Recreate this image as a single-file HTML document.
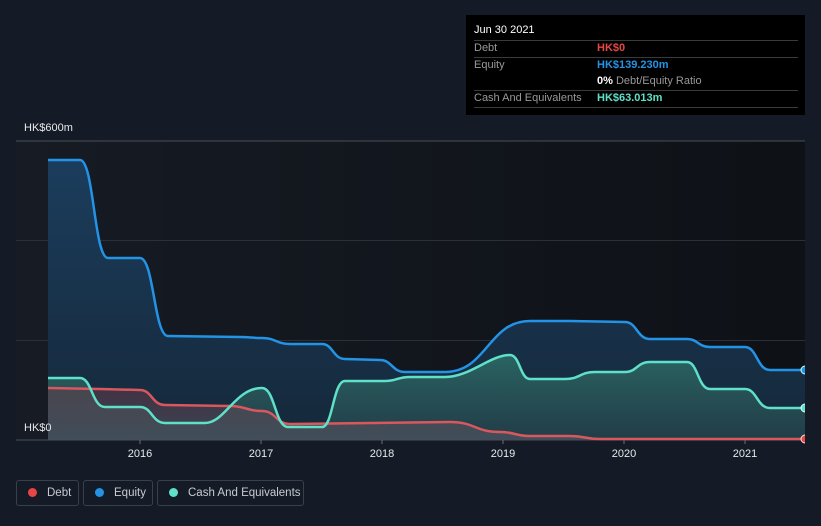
<!DOCTYPE html>
<html><head><meta charset="utf-8"><style>
body{margin:0;width:821px;height:526px;background:#151b26;font-family:"Liberation Sans",sans-serif;overflow:hidden;position:relative}
.t{position:absolute;font-size:11px;white-space:nowrap}
.tip{position:absolute;left:466px;top:15px;width:339px;height:100px;background:#000}
.ln{position:absolute;left:8px;width:324px;height:1px;background:#3a3a3a}
.lg{position:absolute;top:480px;height:26px;border:1px solid #3a404b;border-radius:3px;box-sizing:border-box;color:#c8cbd0;font-size:11.5px;line-height:24px}
.dot{display:inline-block;width:9px;height:9px;border-radius:50%;margin:0 10px 0 11px;vertical-align:-1px}
</style></head><body>
<svg width="821" height="526" style="position:absolute;left:0;top:0">
<defs>
<linearGradient id="bg" x1="0" x2="1" y1="0" y2="0"><stop offset="0" stop-color="#161b24"/><stop offset="1" stop-color="#0e1116"/></linearGradient>
<linearGradient id="eq" x1="0" x2="0" y1="0" y2="1"><stop offset="0" stop-color="#1b3d5c"/><stop offset="1" stop-color="#15283a"/></linearGradient>
<linearGradient id="ca" x1="0" x2="0" y1="0" y2="1"><stop offset="0" stop-color="#2c6a66" stop-opacity=".9"/><stop offset="1" stop-color="#2a4b50" stop-opacity=".6"/></linearGradient>
<linearGradient id="de" x1="0" x2="0" y1="0" y2="1"><stop offset="0" stop-color="#6a3a48" stop-opacity=".5"/><stop offset="1" stop-color="#555a66" stop-opacity=".6"/></linearGradient>
<clipPath id="c"><rect x="0" y="0" width="805" height="526"/></clipPath>
</defs>
<rect x="16" y="141" width="789" height="299" fill="url(#bg)"/>
<line x1="16" x2="805" y1="141" y2="141" stroke="#4a4e57"/>
<line x1="16" x2="805" y1="240.5" y2="240.5" stroke="#2b2f37"/>
<line x1="16" x2="805" y1="340.5" y2="340.5" stroke="#2b2f37"/>
<line x1="16" x2="805" y1="440" y2="440" stroke="#4a4e57"/>
<g clip-path="url(#c)">
<path fill="url(#eq)" d="M48,160 L80,160 C94,160 94,258 108,258 L140,258 C154,258 154,336 168,336 L240,337 C251,337 251,338 262,338 C276,338 276,344 290,344 L322,344 C333,344 333,359 345,359 L380,360 C392,360 392,372 405,372 L445,372 C487,372 488,321 530,321 L570,321 L625,322 C637,322 637,339 650,339 L687,339 C698,339 698,347 710,347 L745,347 C757,347 757,370 770,370 L805,370 L805,440 L48,440Z"/>
<path fill="url(#ca)" d="M48,378 L80,378 C92,378 92,407 105,407 L140,407 C152,407 152,423 165,423 L205,423 C225,423 235,388 262,388 C275,388 275,427 288,427 L322,427 C333,427 333,381 345,381 L385,381 C397,381 397,377 410,377 L445,377 C470,377 490,355 510,355 C520,355 520,379 530,379 L565,379 C580,379 580,372 595,372 L625,372 C637,372 637,362 650,362 L687,362 C698,362 698,389 710,389 L745,389 C757,389 757,408 770,408 L805,408 L805,440 L48,440Z"/>
<path fill="url(#de)" d="M48,388 L100,389 L140,390 C152,390 152,405 165,405 L230,406 C246,406 246,411 262,411 C276,411 276,424 290,424 L450,422 C475,422 475,432 500,432 C515,432 515,436 530,436 L570,436 C585,436 585,439 600,439 L805,439 L805,440 L48,440Z"/>
<path fill="none" stroke="#d9585e" stroke-width="2.5" d="M48,388 L100,389 L140,390 C152,390 152,405 165,405 L230,406 C246,406 246,411 262,411 C276,411 276,424 290,424 L450,422 C475,422 475,432 500,432 C515,432 515,436 530,436 L570,436 C585,436 585,439 600,439 L805,439"/>
<path fill="none" stroke="#5fe0c8" stroke-width="2.5" d="M48,378 L80,378 C92,378 92,407 105,407 L140,407 C152,407 152,423 165,423 L205,423 C225,423 235,388 262,388 C275,388 275,427 288,427 L322,427 C333,427 333,381 345,381 L385,381 C397,381 397,377 410,377 L445,377 C470,377 490,355 510,355 C520,355 520,379 530,379 L565,379 C580,379 580,372 595,372 L625,372 C637,372 637,362 650,362 L687,362 C698,362 698,389 710,389 L745,389 C757,389 757,408 770,408 L805,408"/>
<path fill="none" stroke="#2393e6" stroke-width="2.5" d="M48,160 L80,160 C94,160 94,258 108,258 L140,258 C154,258 154,336 168,336 L240,337 C251,337 251,338 262,338 C276,338 276,344 290,344 L322,344 C333,344 333,359 345,359 L380,360 C392,360 392,372 405,372 L445,372 C487,372 488,321 530,321 L570,321 L625,322 C637,322 637,339 650,339 L687,339 C698,339 698,347 710,347 L745,347 C757,347 757,370 770,370 L805,370"/>
<circle cx="805" cy="370" r="4" fill="#2393e6" stroke="#cfe" stroke-width="1"/>
<circle cx="805" cy="408" r="4" fill="#5fe0c8" stroke="#dff" stroke-width="1"/>
<circle cx="805" cy="439" r="4" fill="#e84545" stroke="#fdd" stroke-width="1"/>
</g>
<g stroke="#6a6e76"><line x1="140" x2="140" y1="440" y2="444"/><line x1="261" x2="261" y1="440" y2="444"/><line x1="382" x2="382" y1="440" y2="444"/><line x1="503" x2="503" y1="440" y2="444"/><line x1="624" x2="624" y1="440" y2="444"/><line x1="745" x2="745" y1="440" y2="444"/></g>
<g fill="#e6e8ea" font-size="11" text-anchor="middle" font-family="Liberation Sans"><text x="140" y="457">2016</text><text x="261" y="457">2017</text><text x="382" y="457">2018</text><text x="503" y="457">2019</text><text x="624" y="457">2020</text><text x="745" y="457">2021</text></g>
</svg>
<div class="t" style="left:24px;top:122px;color:#e6e8ea">HK$600m</div>
<div class="t" style="left:24px;top:422px;color:#e6e8ea">HK$0</div>
<div class="tip">
<div class="t" style="left:8px;top:9px;color:#fff">Jun 30 2021</div>
<div class="ln" style="top:25px"></div>
<div class="t" style="left:8px;top:27px;color:#999">Debt</div><div class="t" style="left:131px;top:27px;color:#e84545;font-weight:bold">HK$0</div>
<div class="ln" style="top:42px"></div>
<div class="t" style="left:8px;top:44px;color:#999">Equity</div><div class="t" style="left:131px;top:44px;color:#2393e6;font-weight:bold">HK$139.230m</div>
<div class="t" style="left:131px;top:60px;color:#999"><b style="color:#fff">0%</b> Debt/Equity Ratio</div>
<div class="ln" style="top:75px"></div>
<div class="t" style="left:8px;top:77px;color:#999">Cash And Equivalents</div><div class="t" style="left:131px;top:77px;color:#5fe0c8;font-weight:bold">HK$63.013m</div>
<div class="ln" style="top:92px"></div>
</div>
<div class="lg" style="left:16px;width:63px"><span class="dot" style="background:#e84545"></span>Debt</div>
<div class="lg" style="left:83px;width:70px"><span class="dot" style="background:#2393e6"></span>Equity</div>
<div class="lg" style="left:157px;width:147px"><span class="dot" style="background:#5fe0c8"></span>Cash And Equivalents</div>
</body></html>
